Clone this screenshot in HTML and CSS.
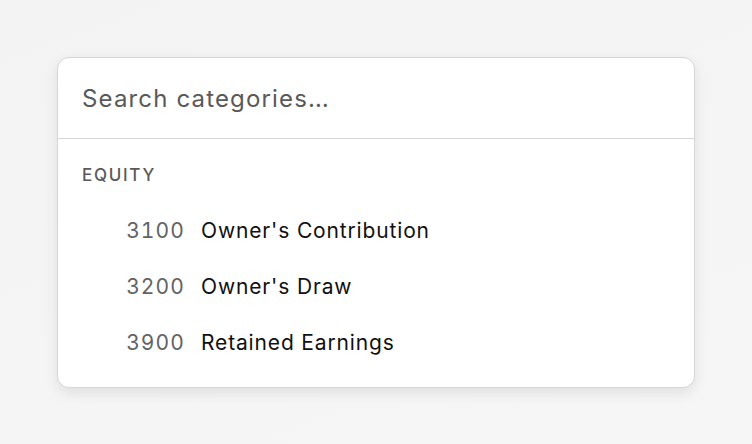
FILE: index.html
```html
<!DOCTYPE html>
<html>
<head>
<meta charset="utf-8">
<link rel="stylesheet" href="styles.css">
</head>
<body>
<div class="stage">
  <div class="card">
    <div class="search">Search categories…</div>
    <div class="list">
      <div class="group">EQUITY</div>
      <div class="item"><span class="num">3100</span><span class="name">Owner's Contribution</span></div>
      <div class="item"><span class="num">3200</span><span class="name">Owner's Draw</span></div>
      <div class="item"><span class="num">3900</span><span class="name">Retained Earnings</span></div>
    </div>
  </div>
</div>
</body>
</html>
```
FILE: styles.css
```css
html, body { margin: 0; height: 100%; }
body {
  background: linear-gradient(160deg, #f2f3f2 0%, #f6f6f6 100%);
  font-family: Inter, "Noto Sans", sans-serif;
}
.stage {
  padding: 57px 57px 0 57px;
}
.card {
  width: 636px;
  background: #fff;
  border: 1px solid #d6d6d6;
  border-radius: 12px;
  box-shadow: 0 5px 14px rgba(0,0,0,0.09);
  overflow: hidden;
}
.search {
  height: 80px;
  display: flex;
  align-items: center;
  padding-left: 24px;
  font-size: 24px;
  letter-spacing: 1.15px;
  color: #595959;
  border-bottom: 1px solid #d6d6d6;
}
.list {
  padding: 8px 0 17px 0;
}
.group {
  height: 55px;
  display: flex;
  align-items: center;
  padding-left: 24px;
  font-size: 17px;
  font-weight: 500;
  letter-spacing: 0.1em;
  color: #595959;
}
.item {
  height: 56px;
  display: flex;
  align-items: center;
  font-size: 21px;
  letter-spacing: 0.85px;
}
.num {
  width: 127px;
  text-align: right;
  color: #636363;
  font-feature-settings: "tnum";
  letter-spacing: 1.1px;
}
.name {
  margin-left: 16px;
  color: #111;
}
```
